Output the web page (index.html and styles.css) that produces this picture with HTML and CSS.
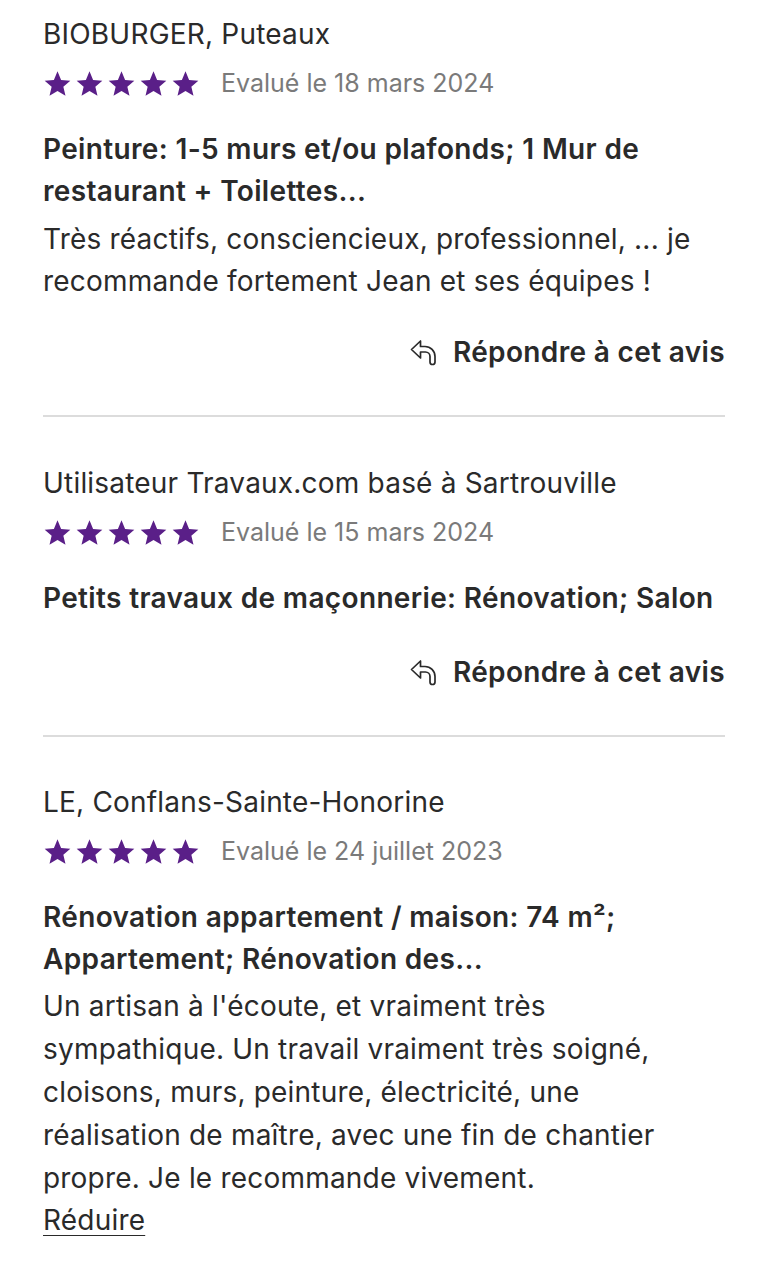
FILE: index.html
```html
<!DOCTYPE html>
<html>
<head>
  <title>Avis clients</title>
  <link rel="stylesheet" href="styles.css">
</head>
<body>
    <svg class="defs" width="0" height="0">
        <symbol id="star" viewBox="0 0 24 24">
            <path d="M12 1.2l3.2 7.6 8.2.7-6.2 5.4 1.9 8-7.1-4.3-7.1 4.3 1.9-8L0.6 9.5l8.2-.7z"/>
        </symbol>
        <symbol id="reply" viewBox="0 0 28 27">
            <path d="M1.5 10.5L10.5 2V7.5H15A10 10 0 0 1 25 17.5V23A2.5 2.5 0 0 1 20 23V17.5A4.5 4.5 0 0 0 15.5 13H10.5V19Z" fill="none" stroke="currentColor" stroke-width="1.7" stroke-linejoin="round"/>
        </symbol>
    </svg>

    <div class="reviews">
        <div class="review">
            <div class="review-author">BIOBURGER, Puteaux</div>
            <div class="review-rating">
                <span class="stars">
                    <svg><use href="#star"/></svg><svg><use href="#star"/></svg><svg><use href="#star"/></svg><svg><use href="#star"/></svg><svg><use href="#star"/></svg>
                </span>
                <span class="review-date">Evalué le 18 mars 2024</span>
            </div>
            <div class="review-title">Peinture: 1-5 murs et/ou plafonds; 1 Mur de restaurant + Toilettes...</div>
            <p class="review-text">Très réactifs, consciencieux, professionnel, ... je recommande fortement Jean et ses équipes !</p>
            <div class="review-actions">
                <a class="reply-link" href="#"><svg class="reply-icon"><use href="#reply"/></svg>Répondre à cet avis</a>
            </div>
        </div>

        <div class="review">
            <div class="review-author">Utilisateur Travaux.com basé à Sartrouville</div>
            <div class="review-rating">
                <span class="stars">
                    <svg><use href="#star"/></svg><svg><use href="#star"/></svg><svg><use href="#star"/></svg><svg><use href="#star"/></svg><svg><use href="#star"/></svg>
                </span>
                <span class="review-date">Evalué le 15 mars 2024</span>
            </div>
            <div class="review-title">Petits travaux de maçonnerie: Rénovation; Salon</div>
            <div class="review-actions">
                <a class="reply-link" href="#"><svg class="reply-icon"><use href="#reply"/></svg>Répondre à cet avis</a>
            </div>
        </div>

        <div class="review last">
            <div class="review-author">LE, Conflans-Sainte-Honorine</div>
            <div class="review-rating">
                <span class="stars">
                    <svg><use href="#star"/></svg><svg><use href="#star"/></svg><svg><use href="#star"/></svg><svg><use href="#star"/></svg><svg><use href="#star"/></svg>
                </span>
                <span class="review-date">Evalué le 24 juillet 2023</span>
            </div>
            <div class="review-title">Rénovation appartement / maison: 74 m²; Appartement; Rénovation des...</div>
            <p class="review-text long">Un artisan à l'écoute, et vraiment très sympathique. Un travail vraiment très soigné, cloisons, murs, peinture, électricité, une réalisation de maître, avec une fin de chantier propre. Je le recommande vivement.</p>
            <a class="toggle-link" href="#">Réduire</a>
        </div>
    </div>
</body>
</html>
```

FILE: styles.css
```css
:root {
    --text-color: #2a2a2a;
    --muted-color: #7a7a7a;
    --star-color: #5a1f88;
    --line-color: #dcdcdc;
}

body {
    margin: 0;
    padding: 0;
    background-color: #fff;
    color: var(--text-color);
    font-family: Inter, 'Noto Sans', sans-serif;
    font-size: 28px;
    line-height: 42px;
    letter-spacing: 0.2px;
}

.defs {
    position: absolute;
}

.reviews {
    padding: 13px 43px 0 43px;
}

.review {
    display: flex;
    flex-direction: column;
    padding-bottom: 42px;
    margin-bottom: 45px;
    border-bottom: 2px solid var(--line-color);
}

.review.last {
    border-bottom: none;
    margin-top: -1px;
    margin-bottom: 0;
}

.review-author {
    font-weight: 400;
}

.review-rating {
    display: flex;
    align-items: center;
    margin-top: 7px;
}

.stars {
    display: flex;
    gap: 5px;
    margin-left: 1px;
}

.stars svg {
    width: 27px;
    height: 27px;
    fill: var(--star-color);
}

.review-date {
    margin-left: 22px;
    color: var(--muted-color);
    font-size: 25px;
    letter-spacing: 0;
}

.review-title {
    margin-top: 24px;
    font-weight: 600;
    letter-spacing: 0.35px;
}

.review-text {
    margin: 6px 0 0 0;
}

.review-text.long {
    margin-top: 5px;
    line-height: 43px;
}

.review-actions {
    display: flex;
    justify-content: flex-end;
    margin-top: 29px;
}

.review-title + .review-actions {
    margin-top: 32px;
}

.reply-link {
    display: flex;
    align-items: center;
    color: var(--text-color);
    text-decoration: none;
    font-weight: 600;
    letter-spacing: 0.35px;
}

.reply-icon {
    width: 28px;
    height: 27px;
    margin-right: 15px;
    color: var(--text-color);
}

.toggle-link {
    align-self: flex-start;
    margin-top: -1px;
    color: var(--text-color);
    text-decoration: underline;
    text-underline-offset: 5px;
    text-decoration-thickness: 1px;
}
```
